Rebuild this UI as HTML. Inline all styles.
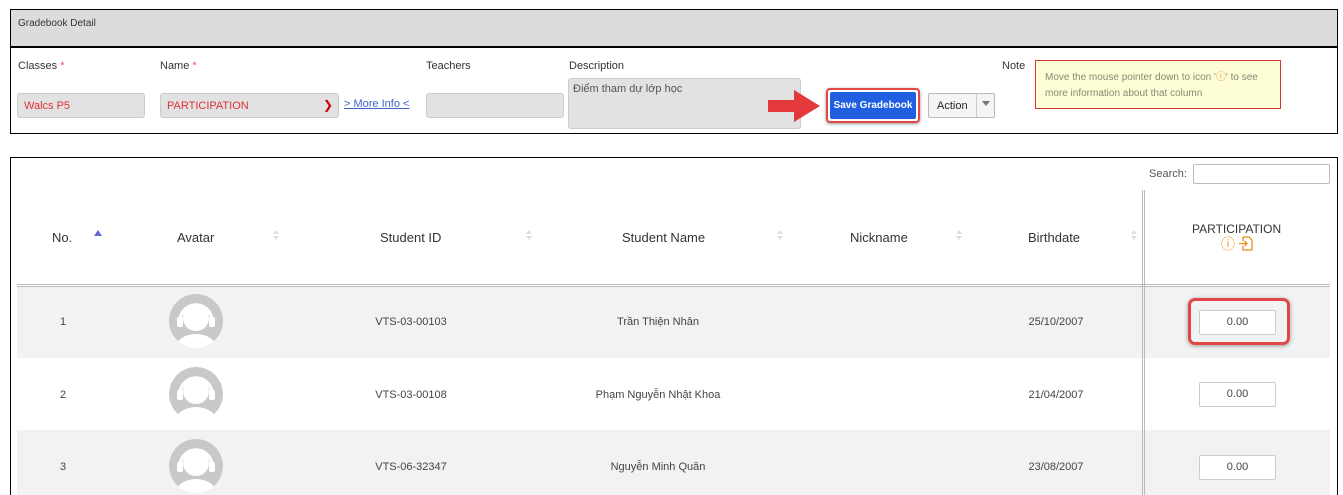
<!DOCTYPE html>
<html style="height:495px;overflow:hidden"><head><meta charset="utf-8"><style>
body{margin:0;width:1343px;height:495px;background:#fff;position:relative;overflow:hidden;font-family:"Liberation Sans","Noto Sans CJK SC",sans-serif;color:#333}
.a{position:absolute}
.lbl{font-size:11px;color:#333}
.req{color:#e55}
.inp{position:absolute;background:#e2e2e2;border:1px solid #ccc;border-radius:3px;box-sizing:border-box;font-size:11px;color:#e0333a;padding:6px 6px}
.th{position:absolute;top:230px;font-size:13px;color:#333}
.sort{position:absolute;top:230px;width:0;height:0}
.sort:before{content:"";position:absolute;left:-3px;top:0;border:3px solid transparent;border-bottom:4px solid #ddd;border-top:0}
.sort:after{content:"";position:absolute;left:-3px;top:6px;border:3px solid transparent;border-top:4px solid #ddd;border-bottom:0}
.td{position:absolute;font-size:11px;color:#444;transform:translateX(-50%)}
.score{position:absolute;left:1199px;width:77px;height:25px;border:1px solid #ccc;border-radius:2px;box-sizing:border-box;background:#fff;font-size:11px;text-align:center;line-height:23px;color:#444}
</style></head><body>
<div class="a" style="left:10px;top:9px;width:1328px;height:125px;border:1px solid #000;box-sizing:border-box"></div>
<div class="a" style="left:11px;top:10px;width:1326px;height:36px;background:#dcdcdc"></div>
<div class="a" style="left:11px;top:46px;width:1326px;height:2px;background:#000"></div>
<div class="a lbl" style="left:18px;top:18px;font-size:10px">Gradebook Detail</div>
<div class="a lbl" style="left:18px;top:60px">Classes <span class="req">*</span></div>
<div class="a lbl" style="left:160px;top:60px">Name <span class="req">*</span></div>
<div class="a lbl" style="left:426px;top:60px">Teachers</div>
<div class="a lbl" style="left:569px;top:60px">Description</div>
<div class="a lbl" style="left:1002px;top:60px">Note</div>
<div class="inp" style="left:17px;top:93px;width:128px;height:25px">Walcs P5</div>
<div class="inp" style="left:160px;top:93px;width:179px;height:25px">PARTICIPATION<span style="position:absolute;right:5px;top:4px;color:#c00;font-size:12px">&#10095;</span></div>
<div class="a" style="left:344px;top:98px;font-size:11px;color:#3b63c9;text-decoration:underline">&gt; More Info &lt;</div>
<div class="inp" style="left:426px;top:93px;width:138px;height:25px"></div>
<div class="inp" style="left:568px;top:78px;width:233px;height:51px;color:#555;padding:4px 4px">Điểm tham dự lớp học</div>
<svg class="a" style="left:764px;top:86px" width="60" height="40"><path d="M4 14 H30 V4 L56 20 L30 36 V26 H4 Z" fill="#e3393b"/></svg>
<div class="a" style="left:826px;top:88px;width:94px;height:35px;border:2px solid #e04848;border-radius:4px;box-sizing:border-box;box-shadow:0 1px 3px #999"></div>
<div class="a" style="left:830px;top:92px;width:86px;height:27px;background:#1f5fe0;border-radius:2px;color:#fff;font-size:10px;font-weight:bold;text-align:center;line-height:27px">Save Gradebook</div>
<div class="a" style="left:928px;top:93px;width:67px;height:25px;border:1px solid #bbb;border-radius:2px;box-sizing:border-box;background:#f4f4f4"></div>
<div class="a" style="left:937px;top:100px;font-size:11px;color:#222">Action</div>
<div class="a" style="left:976px;top:94px;width:1px;height:23px;background:#ccc"></div>
<div class="a" style="left:982px;top:101px;border:4px solid transparent;border-top:5px solid #777"></div>
<div class="a" style="left:1035px;top:60px;width:246px;height:49px;background:#fdfdd6;border:1px solid #d33;box-sizing:border-box;font-size:10px;color:#887;padding:9px 9px;line-height:16px">Move the mouse pointer down to icon '<span style="color:#e8901c">ⓘ</span>' to see more information about that column</div>
<div class="a" style="left:10px;top:157px;width:1328px;height:338px;border:1px solid #000;border-bottom:0;box-sizing:border-box"></div>
<div class="a" style="left:1149px;top:168px;font-size:11px;color:#555">Search:</div>
<div class="a" style="left:1193px;top:164px;width:137px;height:20px;border:1px solid #bbb;border-radius:2px;box-sizing:border-box"></div>
<div class="a" style="left:17px;top:287px;width:1313px;height:71px;background:#f2f2f2"></div>
<div class="a" style="left:17px;top:430px;width:1313px;height:65px;background:#f2f2f2"></div>
<div class="a" style="left:17px;top:284px;width:1313px;height:1px;background:#bbb"></div>
<div class="a" style="left:17px;top:286px;width:1313px;height:1px;background:#bbb"></div>
<div class="a" style="left:1142px;top:190px;width:1px;height:305px;background:#bbb"></div>
<div class="a" style="left:1144px;top:190px;width:1px;height:305px;background:#bbb"></div>
<div class="th" style="left:52px">No.</div>
<div class="a" style="left:94px;top:230px;border:4px solid transparent;border-bottom:6px solid #6666cc;border-top:0"></div>
<div class="th" style="left:177px">Avatar</div><div class="sort" style="left:276px"></div>
<div class="th" style="left:380px">Student ID</div><div class="sort" style="left:529px"></div>
<div class="th" style="left:622px">Student Name</div><div class="sort" style="left:780px"></div>
<div class="th" style="left:850px">Nickname</div><div class="sort" style="left:959px"></div>
<div class="th" style="left:1028px">Birthdate</div><div class="sort" style="left:1134px"></div>
<div class="a" style="left:1192px;top:222px;font-size:12px;color:#333">PARTICIPATION</div>
<div class="a" style="left:1221px;top:234px;font-size:14px;color:#e8901c">ⓘ</div>
<svg class="a" style="left:1238px;top:236px" width="16" height="15"><path d="M5 1 H11 L14 4 V14 H5 V10 M5 5 V1 M1 7.5 H9 M6.5 5 L9 7.5 L6.5 10" fill="none" stroke="#e8901c" stroke-width="1.3"/></svg>
<div class="td" style="left:63px;top:316px">1</div>
<div class="td" style="left:411px;top:316px">VTS-03-00103</div>
<div class="td" style="left:658px;top:316px">Trần Thiện Nhân</div>
<div class="td" style="left:1056px;top:316px">25/10/2007</div>
<div class="td" style="left:63px;top:389px">2</div>
<div class="td" style="left:411px;top:389px">VTS-03-00108</div>
<div class="td" style="left:658px;top:389px">Phạm Nguyễn Nhật Khoa</div>
<div class="td" style="left:1056px;top:389px">21/04/2007</div>
<div class="td" style="left:63px;top:461px">3</div>
<div class="td" style="left:411px;top:461px">VTS-06-32347</div>
<div class="td" style="left:658px;top:461px">Nguyễn Minh Quân</div>
<div class="td" style="left:1056px;top:461px">23/08/2007</div>
<svg class="a" style="left:168px;top:293px" width="56" height="56"><defs><clipPath id="c"><circle cx="28" cy="28" r="27"/></clipPath></defs><g clip-path="url(#c)"><circle cx="28" cy="28" r="27" fill="#c8c8c8"/><circle cx="28" cy="25" r="13" fill="#fff"/><ellipse cx="28" cy="56" rx="21" ry="15" fill="#fff"/><path d="M12 28 A16 16 0 0 1 44 28" fill="none" stroke="#fff" stroke-width="3.5"/><rect x="9" y="24" width="6" height="10" rx="2" fill="#fff"/><rect x="41" y="24" width="6" height="10" rx="2" fill="#fff"/></g></svg>
<svg class="a" style="left:168px;top:366px" width="56" height="56"><g clip-path="url(#c)"><circle cx="28" cy="28" r="27" fill="#c8c8c8"/><circle cx="28" cy="25" r="13" fill="#fff"/><ellipse cx="28" cy="56" rx="21" ry="15" fill="#fff"/><path d="M12 28 A16 16 0 0 1 44 28" fill="none" stroke="#fff" stroke-width="3.5"/><rect x="9" y="24" width="6" height="10" rx="2" fill="#fff"/><rect x="41" y="24" width="6" height="10" rx="2" fill="#fff"/></g></svg>
<svg class="a" style="left:168px;top:438px" width="56" height="56"><g clip-path="url(#c)"><circle cx="28" cy="28" r="27" fill="#c8c8c8"/><circle cx="28" cy="25" r="13" fill="#fff"/><ellipse cx="28" cy="56" rx="21" ry="15" fill="#fff"/><path d="M12 28 A16 16 0 0 1 44 28" fill="none" stroke="#fff" stroke-width="3.5"/><rect x="9" y="24" width="6" height="10" rx="2" fill="#fff"/><rect x="41" y="24" width="6" height="10" rx="2" fill="#fff"/></g></svg>
<div class="a" style="left:1188px;top:298px;width:102px;height:47px;border:3px solid #e04848;border-radius:7px;box-sizing:border-box;box-shadow:0 1px 4px #999"></div>
<div class="score" style="top:310px">0.00</div>
<div class="score" style="top:382px">0.00</div>
<div class="score" style="top:455px">0.00</div>
</body></html>
